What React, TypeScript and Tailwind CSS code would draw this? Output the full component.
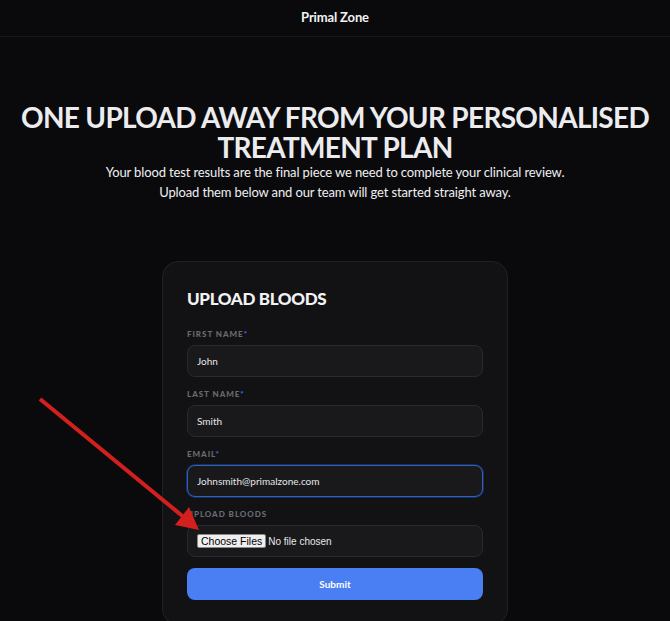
import React from 'react';

const fieldLabel = "text-[8px] leading-[12px] font-black tracking-[0.12em] text-[#6a6a70] uppercase";
const inputBase =
  "h-8 w-full rounded-lg bg-[#19191c] border border-[#2a2a2e] px-[9px] text-[10px] text-[#e6e6e8] outline-none";

function Field({ label, value, focused }: { label: string; value: string; focused?: boolean }) {
  return (
    <div className="flex flex-col gap-[5px]">
      <div className={fieldLabel}>
        {label}
        <span className="text-[#3d6cf0]">*</span>
      </div>
      <input
        readOnly
        value={value}
        className={
          focused
            ? inputBase + " !border-[#2b63c4] shadow-[0_0_0_1px_rgba(43,99,196,0.35)]"
            : inputBase
        }
      />
    </div>
  );
}

function Arrow() {
  return (
    <svg className="pointer-events-none absolute left-0 top-0" width="670" height="621" viewBox="0 0 670 621">
      <line x1="40" y1="399" x2="186" y2="519" stroke="#d41f1f" strokeWidth="4" />
      <polygon points="199,530 175,525 189,507" fill="#d41f1f" />
    </svg>
  );
}

export default function App() {
  return (
    <div className="relative h-[621px] w-[670px] overflow-hidden bg-[#0a0a0c] font-['Lato',sans-serif] text-white">
      <header className="flex h-[37px] items-center justify-center border-b border-[#17171a]">
        <span className="text-[13px] font-bold tracking-[-0.01em] text-[#f2f2f4]">Primal Zone</span>
      </header>

      <main className="flex flex-col items-center pt-[65px]">
        <h1 className="whitespace-nowrap text-center text-[28px] font-bold leading-[30px] tracking-[-0.025em] text-[#ececef]">
          ONE UPLOAD AWAY FROM YOUR PERSONALISED
          <br />
          TREATMENT PLAN
        </h1>
        <p className="text-center text-[13px] leading-[20px] tracking-[-0.01em] text-[#f0f0f2]">
          Your blood test results are the final piece we need to complete your clinical review.
          <br />
          Upload them below and our team will get started straight away.
        </p>

        <div className="mt-[59px] w-[346px] rounded-2xl border border-[#212124] bg-[#121214] px-6 pt-[25px] pb-6">
          <h2 className="text-[17px] font-black leading-[24px] tracking-[-0.02em] text-[#f2f2f4]">UPLOAD BLOODS</h2>

          <div className="mt-[17px] flex flex-col gap-[11px]">
            <Field label="First name" value="John" />
            <Field label="Last name" value="Smith" />
            <Field label="Email" value="Johnsmith@primalzone.com" focused />

            <div className="flex flex-col gap-[5px]">
              <div className={fieldLabel}>Upload bloods</div>
              <div className="flex h-8 items-center rounded-lg border border-[#2a2a2e] bg-[#19191c] px-[9px]">
                <input
                  type="file"
                  multiple
                  className="font-['Liberation_Sans',sans-serif] text-[10px] leading-[13px] text-[#e8e8ea] file:mr-[2px] file:h-[14px] file:rounded-[2px] file:border file:border-solid file:border-[#8a8a8a] file:bg-[#efefef] file:px-[3px] file:text-[10.5px] file:leading-[12px] file:text-black"
                />
              </div>
            </div>

            <button className="h-8 w-full rounded-lg bg-[#4a7ef3] text-[10px] font-bold text-white">Submit</button>
          </div>
        </div>
      </main>

      <Arrow />
    </div>
  );
}
